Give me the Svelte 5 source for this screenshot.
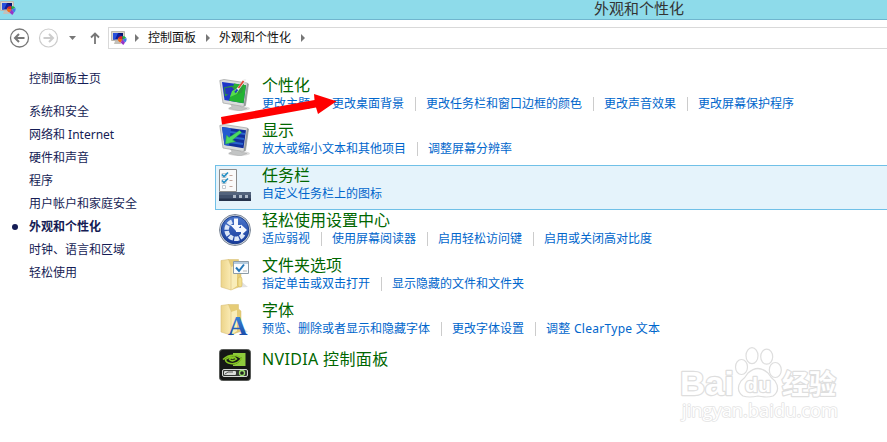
<script>
  const sidebar = [
    '系统和安全',
    '网络和 Internet',
    '硬件和声音',
    '程序',
    '用户帐户和家庭安全',
    '外观和个性化',
    '时钟、语言和区域',
    '轻松使用'
  ];
  const current = '外观和个性化';

  const categories = [
    { icon: 'personalize', title: '个性化', links: ['更改主题', '更改桌面背景', '更改任务栏和窗口边框的颜色', '更改声音效果', '更改屏幕保护程序'] },
    { icon: 'display', title: '显示', links: ['放大或缩小文本和其他项目', '调整屏幕分辨率'] },
    { icon: 'taskbar', title: '任务栏', links: ['自定义任务栏上的图标'] },
    { icon: 'ease', title: '轻松使用设置中心', links: ['适应弱视', '使用屏幕阅读器', '启用轻松访问键', '启用或关闭高对比度'] },
    { icon: 'folder', title: '文件夹选项', links: ['指定单击或双击打开', '显示隐藏的文件和文件夹'] },
    { icon: 'fonts', title: '字体', links: ['预览、删除或者显示和隐藏字体', '更改字体设置', '调整 ClearType 文本'] },
    { icon: 'nvidia', title: 'NVIDIA 控制面板', links: [] }
  ];

  let selected = $state('taskbar');
</script>

{#snippet panelIcon()}
  <svg class="panel-icon" width="16" height="16" viewBox="0 0 16 16">
    <path d="M0.5 1.500h13v9h-13z" fill="#d8d5cc" stroke="#bbb8b0" />
    <path d="M2 3h10v6.500H2z" fill="#10209c" />
    <path d="M2 3h5L4 9.500H2z" fill="#2850dc" />
    <path d="M7 3h5v3z" fill="#07126c" />
    <path d="M4 11h5l1 3H3z" fill="#c4c1ba" />
    <path d="M11.500 9.500L7 8q1-2 4.500-2z" fill="#e22626" />
    <path d="M11.500 9.500V6q3 0 3.800 2z" fill="#20b14a" />
    <path d="M11.500 9.500l3.800-1.500q1 3-1.300 4.500z" fill="#3b7bea" />
    <path d="M11.500 9.500L7 8q-.8 3 2.500 4.500z" fill="#f16a1a" />
    <path d="M11.500 9.500l-2 3 2.800 2.500 1.700-2.500z" fill="#9834c6" />
  </svg>
{/snippet}

{#snippet monitor()}
  <ellipse cx="20" cy="29.500" rx="11" ry="2.300" fill="#ddd" />
  <path d="M11 24l11 1v3l6 1.500-7 2.500-11-2.500 3-2z" fill="#c3c5c5" stroke="#aaa" stroke-width=".5" />
  <path d="M.800 1.500L5 .500 28 4l1.500 1-3 21.500-2 1L4 24z" fill="#dadcdc" stroke="#a9abab" stroke-width=".8" />
  <path d="M28 4l1.500 1-3 21.500-2 1z" fill="#979b9b" />
{/snippet}

{#snippet folder()}
  <path d="M12 29l17-1-6-5-8 1z" fill="#e3e3e3" />
  <path d="M9 .500h10.500V5L22 7v20l-10 4z" fill="#e6cc76" stroke="#d6bd70" stroke-width=".5" />
  <path d="M12 8l6-2v21l-6 4z" fill="#f9edb9" />
  <path d="M2 1.500L9.500.500 12 7v24L2 28z" fill="url(#gold)" stroke="#d9c078" stroke-width=".6" />
{/snippet}

{#snippet categoryIcon(name)}
  <svg class="cat-icon" width="32" height="32" viewBox="0 0 32 32">
    {#if name === 'personalize'}
      {@render monitor()}
      <path d="M3 3l24 3.200-2.500 18L5.500 21z" fill="#1c35c8" />
      <path d="M15 4.600l12 1.600-2.500 18L10 21.800z" fill="#23b332" />
      <path d="M5 8.500l8-2 4 2 8-4-2 9-7 3-5-2-5 3z" fill="#2e9a3a" />
      <path d="M6 9l7-1 3 4-4 4-5.500-1z" fill="#2434bd" />
      <path d="M13 12l9-5-4 8-7 3z" fill="#56df4a" />
      <path d="M26.500 0L17 12.500" stroke="#f2f2f2" stroke-width="2.500" />
      <path d="M24.500 2l-5 7" stroke="#e04a38" stroke-width="1.800" />
      <path d="M18.500 10.500l-2.500 3" stroke="#1c46b5" stroke-width="2" />
    {:else if name === 'display'}
      {@render monitor()}
      <path d="M3 3l24 3.200-2.500 18L5.500 21z" fill="#12309c" />
      <path d="M3 3l9 1.200-2 17.500-4.500-.7z" fill="#245ad0" />
      <path d="M11 8l15 2M11 13l14 2M10 18l14 2" stroke="#2b66ce" stroke-width="1.800" />
      <path d="M20.500 6.500l2 2L13.500 16l3 1.500-10 2.500 1-9 2.500 2.500z" fill="#4bdb62" stroke="#2fa34c" stroke-width=".5" />
    {:else if name === 'taskbar'}
      <path d="M.500.500h17v22H.500z" fill="#fafafa" stroke="#8b8b8b" />
      <path d="M3 4.500h4v4H3zM3 10.500h4v4H3zM3.500 16.500h3v3h-3z" fill="#fff" stroke="#c3c9ce" />
      <path d="M3 5.500l2 2 4-4M3 11.500l2 2 4-4" fill="none" stroke="#248fc5" stroke-width="1.700" />
      <path d="M10.500 6.500h3M10.500 11.500h3M10.500 17.500h3" stroke="#c2a59b" />
      <path d="M0 23h32v9H0z" fill="#40506b" />
      <path d="M0 23h32v3H0z" fill="#53637c" />
      <path d="M0 29.500h32V32H0z" fill="#26334c" />
      <path d="M14 26h3v3h-3zM20 26h3v3h-3zM26 26h3v3h-3z" fill="#aeb9c8" />
    {:else if name === 'ease'}
      <circle cx="16" cy="16" r="15.500" fill="#d8dce2" stroke="#7c8797" />
      <circle cx="16" cy="16" r="13.800" fill="url(#blue)" stroke="#193d8b" />
      <path d="M13 7.500A9 9 0 1 0 24.500 20" fill="none" stroke="#dce7f7" stroke-width="4.500" stroke-dasharray="4.600 1.200" />
      <path d="M15 4.500h4V11h3.500L17 17l-5.500-6H15z" fill="#f5f8fe" />
      <path d="M17 14h5v-3.500l6 5.500-6 5.500V18h-5z" fill="#f5f8fe" />
    {:else if name === 'folder'}
      {@render folder()}
      <path d="M14.500 2.500h15v12h-15z" fill="#fafcfe" stroke="#8d9ca7" />
      <path d="M15 3h14v2H15z" fill="#b6ccde" />
      <path d="M24 12h4" stroke="#b7b7b7" />
      <path d="M17 8.500l3 3.500 5-6.500" fill="none" stroke="#2377b8" stroke-width="2" />
      <rect x="19" y="18" width="4" height="10" rx="2" fill="#f2df8d" stroke="#d0b55e" stroke-width=".6" />
    {:else if name === 'fonts'}
      {@render folder()}
      <text x="9" y="30.500" class="font-glyph">A</text>
    {:else}
      <rect x=".500" y=".500" width="31" height="31" rx="3" fill="#161816" stroke="#575a57" />
      <path d="M14 4h12.500v13H14z" fill="#8fcb3c" />
      <path d="M4 11Q11 2 23 9q-5 9-14 6-3-1-5-4z" fill="#161816" />
      <path d="M4 10.500Q13 2.500 22.500 9.500q-5 7-13 4.500-3-1-3-3.500 7-5 11-.500-4 3.500-7 .500 1-2.500 4-.500" fill="none" stroke="#85c623" stroke-width="1.500" />
      <rect x="3.500" y="20.500" width="25" height="7" rx="1.500" fill="#333733" stroke="#d5d8d5" />
      <rect x="5" y="22" width="12" height="4" rx="1" fill="#d9dcd9" />
      <path d="M6 25l3-2h5" stroke="#555" fill="none" />
      <circle cx="23" cy="24" r="2.500" fill="#222" stroke="#9be070" stroke-width="1.300" />
    {/if}
  </svg>
{/snippet}

<svg class="defs" width="0" height="0">
  <defs>
    <linearGradient id="gold"><stop stop-color="#ecd48a" /><stop offset="1" stop-color="#faebb4" /></linearGradient>
    <linearGradient id="blue" x2="0" y2="1"><stop stop-color="#4a76cc" /><stop offset="1" stop-color="#173b9b" /></linearGradient>
    <linearGradient id="letter" x2="0" y2="1"><stop stop-color="#4496e5" /><stop offset="1" stop-color="#113c9d" /></linearGradient>
  </defs>
</svg>

<div class="window">
  <header class="titlebar">
    {@render panelIcon()}
    <h1>外观和个性化</h1>
  </header>

  <nav class="toolbar">
    <svg class="arrows" width="108" height="36" viewBox="0 0 108 36">
      <g fill="none" stroke="#777" stroke-width="1.300">
        <circle cx="19.500" cy="18" r="9" />
        <path d="M24.500 18h-9M19 14l-4 4 4 4" stroke-width="2" />
      </g>
      <g fill="none" stroke="#ccc" stroke-width="1.200">
        <circle cx="48.500" cy="18" r="9" />
        <path d="M43.500 18h9M49 14l4 4-4 4" stroke-width="2" />
      </g>
      <path d="M69 16h7l-3.500 4z" fill="#777" />
      <path d="M95 24V14M91 17.500l4-4 4 4" fill="none" stroke="#777" stroke-width="1.800" />
    </svg>
    <div class="address">
      {@render panelIcon()}
      <i class="chevron"></i>
      <span>控制面板</span>
      <i class="chevron"></i>
      <span>外观和个性化</span>
      <i class="chevron"></i>
    </div>
  </nav>

  <div class="body">
    <aside>
      <div class="home">控制面板主页</div>
      {#each sidebar as item}
        <div class="side-item" class:current={item === current}>{item}</div>
      {/each}
    </aside>

    <main>
      {#each categories as cat}
        <!-- svelte-ignore a11y_no_static_element_interactions -->
        <section
          class="category"
          class:selected={selected === cat.icon}
          class:single={!cat.links.length}
          onmouseenter={() => (selected = cat.icon)}
        >
          {@render categoryIcon(cat.icon)}
          <div class="text">
            <h2>{cat.title}</h2>
            {#if cat.links.length}
              <div class="links">
                {#each cat.links as link}
                  <span class="link" class:latin={/[a-z]/i.test(link)}>{link}</span>
                {/each}
              </div>
            {/if}
          </div>
        </section>
      {/each}
    </main>
  </div>

  <svg class="pointer" width="116" height="36" viewBox="0 0 116 36">
    <path d="M0 25L93.500 8 93 2l22.500 7.200L97 22l-2-6.500L1 32.500z" fill="#f00" />
  </svg>

  <svg class="watermark" width="170" height="88" viewBox="0 0 170 88">
    <text x="9" y="54" class="wm-bai" textLength="54" lengthAdjust="spacingAndGlyphs">Bai</text>
    <ellipse cx="70.500" cy="26" rx="6" ry="7.500" />
    <ellipse cx="81" cy="14.700" rx="6" ry="8" />
    <ellipse cx="95.700" cy="15.700" rx="6" ry="7.500" />
    <ellipse cx="104.300" cy="29" rx="6" ry="7.500" />
    <path d="M77 32q10-9 20 0 3 5 7 8 6 9-2 15-6 2-15 0-9 2-15 0-8-6-2-15 4-3 7-8z" />
    <text x="74" y="51" class="wm-du" textLength="26" lengthAdjust="spacingAndGlyphs">du</text>
    <text x="111" y="53" class="wm-cn" textLength="54" lengthAdjust="spacingAndGlyphs">经验</text>
    <text x="11" y="76" class="wm-url" textLength="156" lengthAdjust="spacingAndGlyphs">jingyan.baidu.com</text>
  </svg>
</div>

<style>
  :global(body) {
    overflow: hidden;
    background: #fff;
  }
  .window {
    position: relative;
    height: 442px;
    overflow: hidden;
    background: #fff;
    font-family: "Noto Sans", "Noto Sans CJK SC", sans-serif;
    font-size: 12px;
    color: #151c55;
  }
  h1, h2 { margin: 0; font-weight: 400; }
  .defs { position: absolute; }
  svg { display: block; flex: none; }

  .titlebar {
    display: flex;
    box-sizing: border-box;
    height: 20px;
    background: #8edbea;
    border-bottom: 1px solid #70b5ce;
  }
  .titlebar h1 {
    margin-left: 578px;
    font-size: 15px;
    line-height: 17px;
    color: #333;
  }

  .toolbar { display: flex; height: 36px; }
  .address {
    display: flex;
    flex: 1;
    align-items: center;
    box-sizing: border-box;
    height: 22px;
    margin-top: 7px;
    padding-left: 2px;
    border: 1px solid #d9d9d9;
    border-right: 0;
    color: #111;
    line-height: 20px;
  }
  .chevron {
    width: 0;
    margin: 0 9px 0 8px;
    border: 4px solid transparent;
    border-left-color: #777;
    border-right: 0;
  }
  .address span + .chevron { margin-left: 10px; }

  .body { display: flex; }
  aside {
    box-sizing: border-box;
    width: 215px;
    padding: 11px 0 0 29px;
    line-height: 23px;
  }
  .home { margin-bottom: 10px; }
  .side-item { display: flex; align-items: center; }
  .current { font-weight: 700; }
  .current::before {
    content: '';
    width: 6px;
    height: 6px;
    margin: 0 11px 0 -17px;
    border-radius: 50%;
    background: #151c55;
  }

  main { flex: 1; min-width: 0; padding-top: 19px; }
  .category {
    display: flex;
    box-sizing: border-box;
    height: 45px;
    padding: 3px 0 0 3px;
    border: 1px solid transparent;
    border-right: 0;
  }
  .selected { background: #e5f3fb; border-color: #70c0e7; }
  .text { margin-left: 11px; }
  h2 {
    height: 16px;
    margin-top: -4px;
    font-size: 16px;
    line-height: 20px;
    color: #006600;
    white-space: nowrap;
  }
  .links {
    display: flex;
    margin-top: 4px;
    line-height: 17px;
    color: #0066cc;
    white-space: nowrap;
  }
  .link + .link {
    display: flex;
    align-items: center;
    margin-left: 11px;
  }
  .link + .link::before {
    content: '';
    width: 1px;
    height: 14px;
    margin-right: 10px;
    background: #ccc;
  }
  .latin { letter-spacing: 0.28px; }
  .single h2 { margin-top: 0; letter-spacing: 0.35px; }
  .font-glyph {
    font: 700 27px "Liberation Serif", serif;
    fill: url(#letter);
  }

  .pointer { position: absolute; left: 221px; top: 92px; }
  .watermark {
    position: absolute;
    left: 671px;
    top: 341px;
    fill: #fff;
    stroke: #dedede;
    stroke-width: 1.2;
    stroke-linejoin: round;
  }
  .watermark text { paint-order: stroke; stroke-width: 2.4; }
  .wm-bai { font: 700 34px "Liberation Sans", sans-serif; }
  .wm-du { font: 700 21px "Liberation Sans", sans-serif; }
  .wm-cn { font: 700 27px "Noto Sans CJK SC", sans-serif; }
  .watermark .wm-url {
    font: 400 18px "Open Sans", sans-serif;
    stroke: #e4e4e4;
    stroke-width: 1.6;
  }
</style>
